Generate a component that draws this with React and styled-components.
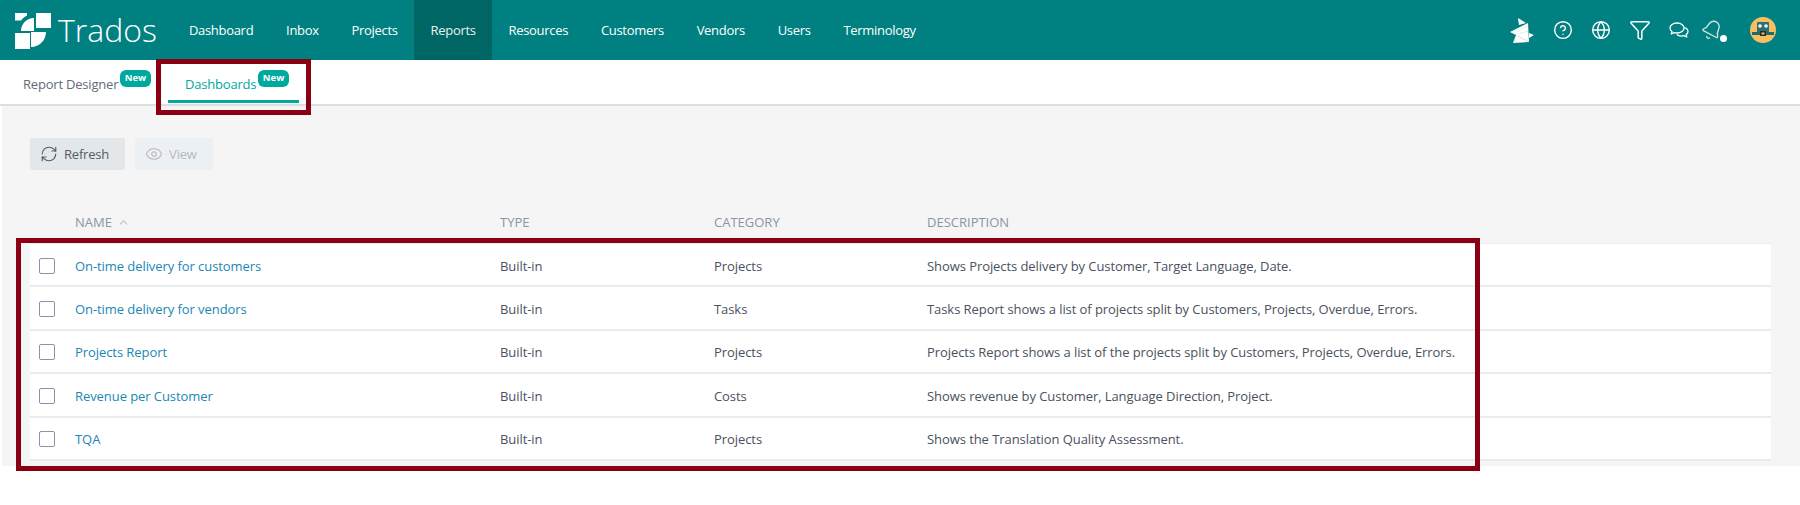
import React from 'react';
import styled, { createGlobalStyle } from 'styled-components';
import { RefreshCw, Eye, ChevronUp, CircleHelp, Globe, Funnel, Bell } from 'lucide-react';

const GlobalStyle = createGlobalStyle`
    html, body {
        margin: 0;
        padding: 0;
        background: #fff;
    }
    body {
        font-family: 'Open Sans', 'Liberation Sans', sans-serif;
    }
    * {
        box-sizing: border-box;
    }
`;

const navItems = ['Dashboard', 'Inbox', 'Projects', 'Reports', 'Resources', 'Customers', 'Vendors', 'Users', 'Terminology'];

const reports = [
    { name: 'On-time delivery for customers', category: 'Projects', description: 'Shows Projects delivery by Customer, Target Language, Date.' },
    { name: 'On-time delivery for vendors', category: 'Tasks', description: 'Tasks Report shows a list of projects split by Customers, Projects, Overdue, Errors.' },
    { name: 'Projects Report', category: 'Projects', description: 'Projects Report shows a list of the projects split by Customers, Projects, Overdue, Errors.' },
    { name: 'Revenue per Customer', category: 'Costs', description: 'Shows revenue by Customer, Language Direction, Project.' },
    { name: 'TQA', category: 'Projects', description: 'Shows the Translation Quality Assessment.' },
];

const Logo = () => (
    <LogoMark viewBox="15 12 36 37">
        <rect x="36" y="13" width="15" height="15" fill="#fff" />
        <rect x="15" y="33" width="15" height="16" fill="#fff" />
        <path d="M15 13h12v2.5c-2.5 1.2-4.5 3-5.8 4.9H15z" fill="#fff" />
        <path d="M34 18v13H21c0-7.2 5.8-13 13-13z" fill="#fff" />
        <path d="M31 32h15c0 8.3-6.7 15-15 15z" fill="#fff" />
    </LogoMark>
);

const StarMark = () => (
    <ToolSvg viewBox="0 0 26 27" width="26" height="27">
        <path d="M9 1l8 5-7 2z" fill="#fff" />
        <path d="M1 15L19 6l1 19-13-7z" fill="#fff" />
        <path d="M7 18l13 7-16 1z" fill="#fff" />
        <path d="M20 16l5 2-5 3z" fill="#fff" />
        <path d="M7 15l12-6M9 17l10-3" stroke="#c4e0e0" strokeWidth="0.5" />
    </ToolSvg>
);

const ChatIcon = () => (
    <ToolSvg viewBox="0 0 20 17" width="20" height="17" fill="none" stroke="#fff" strokeWidth="1.3" strokeLinejoin="round">
        <path d="M8 1C4 1 1 3.2 1 6c0 1.5.8 2.7 2 3.6L2.2 12l3-1.4c.9.3 1.8.4 2.8.4 4 0 7-2.2 7-5s-3-5-7-5z" />
        <path d="M15.4 5.5c2 .7 3.6 2.2 3.6 4 0 1.3-.7 2.3-1.8 3.1l.6 2.4-3-1.3c-.9.3-1.6.4-2.6.4-1.8 0-3.4-.6-4.4-1.5" />
    </ToolSvg>
);

const Avatar = () => (
    <AvatarSvg viewBox="0 0 26 26">
        <circle cx="13" cy="13" r="13" fill="#f8bf62" />
        <rect x="7" y="5" width="12" height="11" rx="1" fill="#2e6f72" />
        <circle cx="10" cy="9" r="1.8" fill="#fff" />
        <circle cx="16" cy="9" r="1.8" fill="#fff" />
        <rect x="2" y="15" width="22" height="3" fill="#1f6a6b" />
        <rect x="10" y="14" width="6" height="5" fill="#2b2b2b" />
        <rect x="11.5" y="15.5" width="3" height="2" fill="#f8bf62" />
    </AvatarSvg>
);

const App = () => {
    return (
        <Page>
            <GlobalStyle />
            <TopBar>
                <Brand>
                    <Logo />
                    <BrandName>Trados</BrandName>
                </Brand>
                <NavList>
                    {navItems.map((item) => (
                        <NavItem key={item} $active={item === 'Reports'}>
                            {item}
                        </NavItem>
                    ))}
                </NavList>
                <Tools>
                    <StarMark />
                    <CircleHelp size={20} strokeWidth={1.7} />
                    <Globe size={20} strokeWidth={1.7} />
                    <Funnel size={22} strokeWidth={1.6} />
                    <ChatIcon />
                    <BellWrap>
                        <TiltedBell size={22} strokeWidth={1.5} color="#cfe3e3" />
                        <BellDot />
                    </BellWrap>
                    <Avatar />
                </Tools>
            </TopBar>

            <TabBar>
                <ReportTab>
                    Report Designer
                    <Badge>New</Badge>
                </ReportTab>
                <DashboardTab>
                    Dashboards
                    <Badge>New</Badge>
                </DashboardTab>
            </TabBar>

            <Content>
                <Toolbar>
                    <ToolButton>
                        <RefreshCw size={18} strokeWidth={1.5} />
                        Refresh
                    </ToolButton>
                    <ToolButton disabled>
                        <Eye size={18} strokeWidth={1.5} />
                        View
                    </ToolButton>
                </Toolbar>

                <HeaderRow>
                    <span />
                    <HeaderCell>
                        NAME
                        <ChevronUp size={13} strokeWidth={1.5} />
                    </HeaderCell>
                    <HeaderCell>TYPE</HeaderCell>
                    <HeaderCell>CATEGORY</HeaderCell>
                    <HeaderCell>DESCRIPTION</HeaderCell>
                </HeaderRow>

                <Rows>
                    {reports.map((report) => (
                        <Row key={report.name}>
                            <Check />
                            <NameLink>{report.name}</NameLink>
                            <Cell>Built-in</Cell>
                            <Cell>{report.category}</Cell>
                            <Cell>{report.description}</Cell>
                        </Row>
                    ))}
                </Rows>
            </Content>

            <TabHighlight />
            <TableHighlight />
        </Page>
    );
};

export default App;

const Page = styled.div`
    position: relative;
    width: 1800px;
    height: 505px;
    overflow: hidden;
    background: #fff;
`;

const TopBar = styled.header`
    display: flex;
    align-items: stretch;
    height: 60px;
    background: #008080;
    color: #fff;
`;

const Brand = styled.div`
    display: flex;
    align-items: center;
    gap: 7px;
    width: 172.5px;
    padding-left: 15px;
`;

const LogoMark = styled.svg`
    width: 36px;
    height: 37px;
    flex: none;
`;

const BrandName = styled.span`
    font-size: 32px;
    font-weight: 300;
    line-height: 1;
`;

const NavList = styled.nav`
    display: flex;
`;

const NavItem = styled.div`
    display: flex;
    align-items: center;
    padding: 0 16.4px;
    font-size: 13px;
    font-weight: 500;
    letter-spacing: -0.3px;
    background: ${(props) => (props.$active ? '#006663' : 'transparent')};
    color: ${(props) => (props.$active ? '#e6f2f2' : '#fff')};
`;

const Tools = styled.div`
    display: flex;
    align-items: center;
    gap: 18px;
    margin-left: auto;
    padding-right: 24px;
`;

const ToolSvg = styled.svg`
    flex: none;
`;

const BellWrap = styled.span`
    position: relative;
    display: flex;
    margin: 0 9px 0 -6px;
`;

const TiltedBell = styled(Bell)`
    transform: rotate(28deg);
`;

const BellDot = styled.span`
    position: absolute;
    right: -4px;
    bottom: -1px;
    width: 7px;
    height: 7px;
    border-radius: 50%;
    background: #fff;
`;

const AvatarSvg = styled.svg`
    width: 26px;
    height: 26px;
    flex: none;
`;

const TabBar = styled.div`
    display: flex;
    height: 46px;
    background: #fff;
    border-bottom: 2px solid #dedede;
`;

const Badge = styled.span`
    margin: -5px 0 0 2px;
    height: 17px;
    padding: 0 4.5px;
    border-radius: 6px;
    background: #00a99d;
    color: #fff;
    font-size: 9.5px;
    font-weight: 700;
    letter-spacing: 0;
    line-height: 16px;
`;

const ReportTab = styled.div`
    display: flex;
    align-items: flex-start;
    width: 168px;
    padding: 15px 0 0 23px;
    font-size: 13px;
    letter-spacing: -0.2px;
    line-height: 18px;
    color: #636b7a;
`;

const DashboardTab = styled(ReportTab)`
    width: 131px;
    height: 43px;
    padding-left: 17px;
    color: #00a99d;
    border-bottom: 3px solid #00a99d;
`;

const Content = styled.main`
    height: 360px;
    margin-left: 2px;
    padding: 32px 29px 0 28px;
    background: #f5f5f5;
`;

const Toolbar = styled.div`
    display: flex;
    gap: 10px;
`;

const ToolButton = styled.button`
    display: flex;
    align-items: center;
    gap: 6px;
    height: 32px;
    padding: 0 16px 0 10px;
    border: none;
    border-radius: 3px;
    background: ${(props) => (props.disabled ? '#edf0f2' : '#e3e7ea')};
    color: ${(props) => (props.disabled ? '#b4b9c0' : '#545b68')};
    font-family: inherit;
    font-size: 13px;
    letter-spacing: -0.2px;
`;

const tableColumns = '45px 425px 214px 213px 1fr';

const HeaderRow = styled.div`
    display: grid;
    grid-template-columns: ${tableColumns};
    align-items: center;
    height: 42px;
    margin-top: 31px;
`;

const HeaderCell = styled.div`
    display: flex;
    align-items: center;
    gap: 5px;
    font-size: 13px;
    color: #8b94a5;
`;

const Rows = styled.div`
    border-top: 1px solid #e8ecef;
`;

const Row = styled.div`
    display: grid;
    grid-template-columns: ${tableColumns};
    align-items: center;
    height: 43.4px;
    padding-top: 2px;
    background: #fff;
    border-bottom: 2px solid #e8ecef;
`;

const Check = styled.span`
    width: 16px;
    height: 16px;
    margin-left: 9px;
    border: 1.5px solid #8a92ad;
    border-radius: 2px;
    background: #fff;
`;

const NameLink = styled.a`
    font-size: 13px;
    letter-spacing: -0.07px;
    color: #1b87b5;
`;

const Cell = styled.div`
    font-size: 13px;
    letter-spacing: -0.07px;
    color: #4a5160;
`;

const TabHighlight = styled.div`
    position: absolute;
    left: 156px;
    top: 59px;
    width: 155px;
    height: 56px;
    border: 5px solid #8a0012;
`;

const TableHighlight = styled.div`
    position: absolute;
    left: 16px;
    top: 238px;
    width: 1464px;
    height: 233px;
    border: 5px solid #8a0012;
`;
